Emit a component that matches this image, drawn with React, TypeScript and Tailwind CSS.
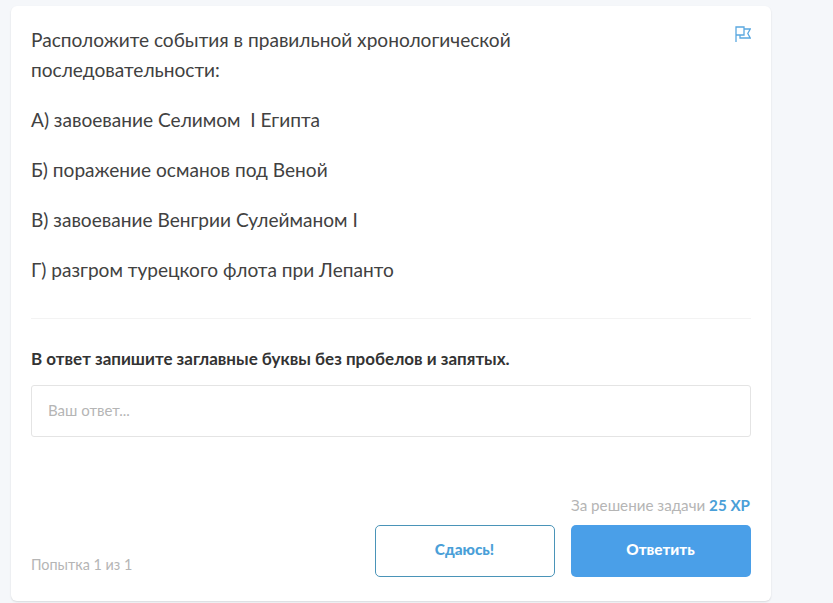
const font = "font-['Lato','Noto_Sans',sans-serif]";

function FlagIcon() {
  return (
    <svg width="17" height="17" viewBox="0 0 17 17" fill="none" stroke="#5aa8e0" strokeWidth="1.3">
      <path d="M2 16V1H10V9H2" />
      <path d="M10 3H16.2L13.8 7.5L16.2 12H6V9" />
    </svg>
  );
}

export default function App() {
  return (
    <div className={`h-[603px] w-[833px] overflow-hidden bg-[#f5f7fa] pl-[11px] pt-[6px] ${font}`}>
      <div className="flex h-[595px] w-[760px] flex-col rounded-md bg-white px-5 shadow-[0_1px_2px_rgba(0,0,0,0.12)]">
        <div className="flex items-start justify-between pt-[19px]">
          <p className="w-[500px] text-[19.1px] leading-[30px] text-[#414141]">
            Расположите события в правильной хронологической последовательности:
          </p>
          <div className="mt-[1px]">
            <FlagIcon />
          </div>
        </div>
        <div className="mt-5 flex flex-col gap-5 text-[19.1px] leading-[30px] text-[#414141]">
          <p className="whitespace-pre">А) завоевание Селимом  I Египта</p>
          <p>Б) поражение османов под Веной</p>
          <p>В) завоевание Венгрии Сулейманом I</p>
          <p>Г) разгром турецкого флота при Лепанто</p>
        </div>
        <div className="mt-[33px] h-px bg-[#f3f3f3]" />
        <p className="mt-[30px] text-[17px] font-bold leading-5 text-[#333]">
          В ответ запишите заглавные буквы без пробелов и запятых.
        </p>
        <div className="mt-4 flex h-[52px] items-center rounded-[3px] border border-[#e4e4e4] px-4 pb-[2px] text-[15px] text-[#b5b5b5]">
          Ваш ответ...
        </div>
        <div className="mt-auto flex items-end justify-between pb-6">
          <span className="pb-[2px] text-[14.4px] leading-5 text-[#b5b5b5]">Попытка 1 из 1</span>
          <div className="flex flex-col items-end">
            <p className="mb-[10px] pr-px text-[15.2px] leading-5 text-[#b5b5b5]">
              За решение задачи <span className="font-bold text-[#4a9fd8]">25 XP</span>
            </p>
            <div className="flex gap-4">
              <button className="h-[52px] w-[180px] rounded-[5px] border border-[#4a94b8] bg-white pb-[3px] pr-[1px] text-[15.3px] font-black text-[#4a9fd8]">
                Сдаюсь!
              </button>
              <button className="h-[52px] w-[180px] rounded-[5px] bg-[#4a9fe8] pb-[3px] pr-[1px] text-[15.3px] font-black text-white">
                Ответить
              </button>
            </div>
          </div>
        </div>
      </div>
    </div>
  );
}
